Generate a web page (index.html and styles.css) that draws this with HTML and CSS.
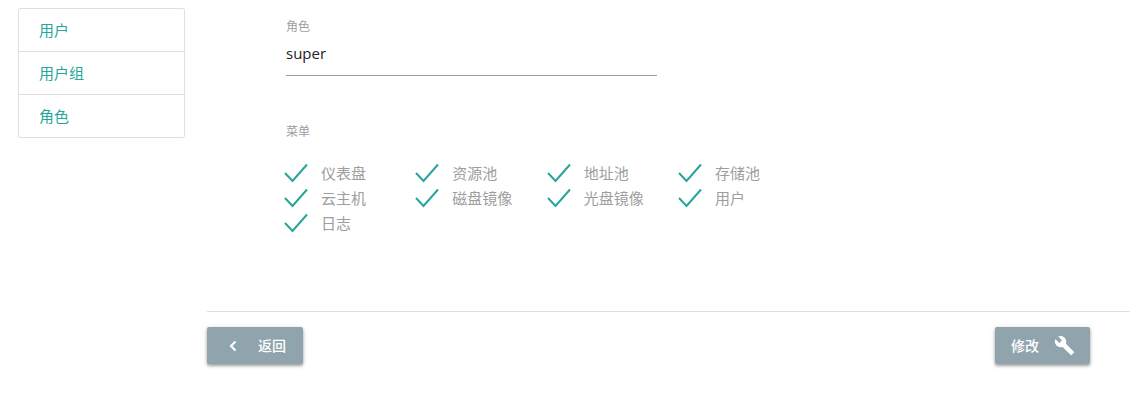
FILE: index.html
```html
<!DOCTYPE html>
<html lang="zh">
<head>
    <meta charset="UTF-8">
    <meta name="viewport" content="width=device-width, initial-scale=1.0">
    <title>角色</title>
    <link rel="stylesheet" href="styles.css">
</head>
<body>
    <div class="page">
        <div class="side-menu">
            <a class="side-item">用户</a>
            <a class="side-item">用户组</a>
            <a class="side-item">角色</a>
        </div>

        <div class="content">
            <div class="role-form">
                <label class="field-label">角色</label>
                <div class="field-value">super</div>

                <label class="field-label menu-label">菜单</label>
                <div class="menu-grid">
                    <div class="menu-item"><svg class="check" viewBox="0 0 24 20"><path d="M1 10l7.5 8L23 1.500"/></svg>仪表盘</div>
                    <div class="menu-item"><svg class="check" viewBox="0 0 24 20"><path d="M1 10l7.5 8L23 1.500"/></svg>资源池</div>
                    <div class="menu-item"><svg class="check" viewBox="0 0 24 20"><path d="M1 10l7.5 8L23 1.500"/></svg>地址池</div>
                    <div class="menu-item"><svg class="check" viewBox="0 0 24 20"><path d="M1 10l7.5 8L23 1.500"/></svg>存储池</div>
                    <div class="menu-item"><svg class="check" viewBox="0 0 24 20"><path d="M1 10l7.5 8L23 1.500"/></svg>云主机</div>
                    <div class="menu-item"><svg class="check" viewBox="0 0 24 20"><path d="M1 10l7.5 8L23 1.500"/></svg>磁盘镜像</div>
                    <div class="menu-item"><svg class="check" viewBox="0 0 24 20"><path d="M1 10l7.5 8L23 1.500"/></svg>光盘镜像</div>
                    <div class="menu-item"><svg class="check" viewBox="0 0 24 20"><path d="M1 10l7.5 8L23 1.500"/></svg>用户</div>
                    <div class="menu-item"><svg class="check" viewBox="0 0 24 20"><path d="M1 10l7.5 8L23 1.500"/></svg>日志</div>
                </div>
            </div>

            <div class="actions">
                <button class="btn">
                    <svg class="btn-icon-left" viewBox="0 0 10 12"><path d="M7.500 1.500L3 6l4.500 4.500"/></svg><span class="btn-text">返回</span>
                </button>
                <button class="btn btn-right">
                    <span class="btn-text">修改</span>
                    <svg class="btn-icon-right" viewBox="0 0 24 24"><path d="M22.700 19l-9.100-9.100c.9-2.300.4-5-1.500-6.900-2-2-5-2.400-7.400-1.300L9 6 6 9 1.600 4.700C.4 7.100.9 10.100 2.900 12.100c1.900 1.900 4.600 2.400 6.900 1.500l9.100 9.100c.4.400 1 .4 1.400 0l2.300-2.300c.5-.4.5-1.100.1-1.400z"/></svg>
                </button>
            </div>
        </div>
    </div>
</body>
</html>
```

FILE: styles.css
```css
body {
    margin: 0;
    background-color: #fff;
    font-family: "Noto Sans CJK SC", "Open Sans", sans-serif;
}
.page {
    display: flex;
    align-items: flex-start;
    padding: 8px 2px 20px 18px;
}
.side-menu {
    width: 165px;
    flex-shrink: 0;
    border: 1px solid #e0e0e0;
    border-radius: 2px;
}
.side-item {
    display: block;
    height: 42px;
    line-height: 42px;
    padding-left: 20px;
    font-size: 15px;
    color: #26a69a;
    border-bottom: 1px solid #e0e0e0;
}
.side-item:last-child {
    border-bottom: none;
}
.content {
    flex: 1;
    margin-left: 22px;
}
.role-form {
    height: 303px;
    padding-left: 79px;
    border-bottom: 1px solid #e0e0e0;
}
.field-label {
    display: block;
    padding-top: 9px;
    font-size: 12px;
    line-height: 18px;
    color: #9e9e9e;
}
.field-value {
    width: 371px;
    height: 40px;
    line-height: 36px;
    font-family: "Open Sans", sans-serif;
    font-size: 15px;
    color: #222;
    border-bottom: 1px solid #9e9e9e;
}
.menu-label {
    padding-top: 46px;
}
.menu-grid {
    display: grid;
    grid-template-columns: repeat(4, 131.330px);
    grid-auto-rows: 25px;
    margin: 20px 0 0 -2px;
}
.menu-item {
    display: flex;
    align-items: center;
    font-size: 15px;
    color: #9e9e9e;
}
.check {
    width: 24px;
    height: 20px;
    margin-right: 13px;
}
.check path {
    fill: none;
    stroke: #26a69a;
    stroke-width: 2;
}
.actions {
    display: flex;
    justify-content: space-between;
    padding: 15px 40px 0 0;
}
.btn {
    display: flex;
    align-items: center;
    height: 37px;
    padding: 0 17px 0 16px;
    border: none;
    border-radius: 2px;
    background-color: #90a4ae;
    color: #fff;
    font-family: inherit;
    font-size: 14px;
    font-weight: 500;
    box-shadow: 0 2px 3px 0 rgba(0,0,0,0.3), 0 1px 5px 0 rgba(0,0,0,0.15);
}
.btn-right {
    padding-right: 15px;
}
.btn-text {
    padding-bottom: 2px;
}
.btn-icon-left {
    width: 10px;
    height: 12px;
    margin: 0 20px 0 5px;
}
.btn-icon-left path {
    fill: none;
    stroke: #fff;
    stroke-width: 2.200;
}
.btn-icon-right {
    width: 21px;
    height: 21px;
    margin-left: 15px;
    fill: #fff;
}
```
